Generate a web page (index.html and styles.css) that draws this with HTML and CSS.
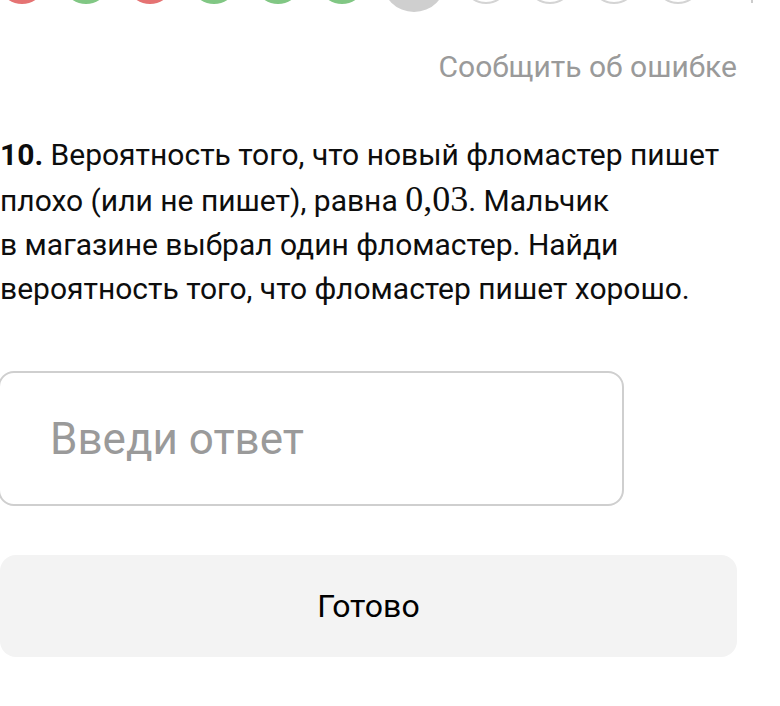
FILE: index.html
```html
<!DOCTYPE html>
<html lang="ru">
  <head>
    <meta charset="UTF-8" />
    <meta name="viewport" content="width=device-width, initial-scale=1.0" />
    <title>Задание 10</title>
    <link rel="stylesheet" href="styles.css">
  </head>
  <body>
    <main class="task">
      <!-- Прогресс по заданиям -->
      <div class="task__steps">
        <span class="task__step task__step--wrong"></span>
        <span class="task__step task__step--right"></span>
        <span class="task__step task__step--wrong"></span>
        <span class="task__step task__step--right"></span>
        <span class="task__step task__step--right"></span>
        <span class="task__step task__step--right"></span>
        <span class="task__step task__step--current"></span>
        <span class="task__step"></span>
        <span class="task__step"></span>
        <span class="task__step"></span>
        <span class="task__step"></span>
        <span class="task__steps-mark"></span>
      </div>

      <div class="task__report">
        <a href="#" class="task__report-link">Сообщить об ошибке</a>
      </div>

      <p class="task__text">
        <b>10.</b> Вероятность того, что новый фломастер пишет плохо (или не пишет), равна <span class="task__math">0,03</span>. Мальчик в&nbsp;магазине выбрал один фломастер. Найди вероятность того, что фломастер пишет хорошо.
      </p>

      <form class="task__form" onsubmit="return false">
        <input type="text" class="task__input" placeholder="Введи ответ" />
        <button type="submit" class="task__submit">Готово</button>
      </form>
    </main>
  </body>
</html>
```

FILE: styles.css
```css
/* Общие настройки */
body {
  margin: 0;
  background-color: #fff;
  font-family: Roboto, "Noto Sans", sans-serif;
  color: #111;
  overflow: hidden;
}

.task {
  width: 737px;
}

/* Кружки прогресса */
.task__steps {
  display: flex;
  align-items: center;
  gap: 16px;
  margin: -52px 0 0 -2px;
  height: 64px;
}

.task__step {
  flex: none;
  width: 44px;
  height: 44px;
  border-radius: 50%;
  border: 2px solid #d4d4d4;
  background-color: #fff;
}

.task__step--wrong {
  border-color: #e57373;
  background-color: #e57373;
}

.task__step--right {
  border-color: #81c784;
  background-color: #81c784;
}

.task__step--current {
  width: 64px;
  height: 64px;
  border: none;
  background-color: #cfcfcf;
}

.task__steps-mark {
  flex: none;
  align-self: flex-end;
  width: 2px;
  height: 3px;
  margin-bottom: 9px;
  margin-left: 33px;
  background-color: #ccc;
}

/* Ссылка «Сообщить об ошибке» */
.task__report {
  text-align: right;
  margin-top: 37px;
}

.task__report-link {
  font-size: 30px;
  line-height: 36px;
  color: #9a9a9a;
  text-decoration: none;
}

/* Текст задания */
.task__text {
  margin: 48px 0 0;
  font-size: 30px;
  line-height: 44px;
  color: #0d0d0d;
}

.task__text b {
  font-weight: 700;
}

.task__math {
  font-family: "Liberation Serif", "DejaVu Serif", serif;
  font-size: 36px;
}

/* Поле ответа и кнопка */
.task__form {
  display: flex;
  flex-direction: column;
  align-items: flex-start;
  gap: 49px;
  margin-top: 60px;
}

.task__input {
  box-sizing: border-box;
  width: 626px;
  height: 135px;
  margin-left: -2px;
  padding: 0 50px;
  border: 2px solid #cfcfcf;
  border-radius: 16px;
  font-family: inherit;
  font-size: 44px;
  color: #111;
  outline: none;
}

.task__input::placeholder {
  color: #9a9a9a;
}

.task__submit {
  width: 737px;
  height: 102px;
  border: none;
  border-radius: 16px;
  background-color: #f3f3f3;
  font-family: inherit;
  font-size: 32px;
  color: #000;
  cursor: pointer;
}
```
